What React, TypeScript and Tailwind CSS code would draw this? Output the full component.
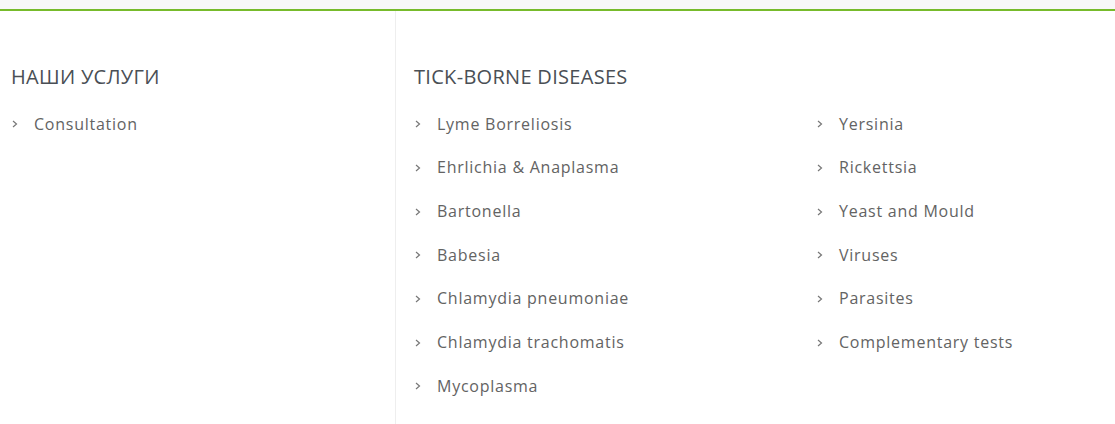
const services = ['Consultation'];

const diseases = [
  'Lyme Borreliosis',
  'Yersinia',
  'Ehrlichia & Anaplasma',
  'Rickettsia',
  'Bartonella',
  'Yeast and Mould',
  'Babesia',
  'Viruses',
  'Chlamydia pneumoniae',
  'Parasites',
  'Chlamydia trachomatis',
  'Complementary tests',
  'Mycoplasma',
];

function Item({ label }: { label: string }) {
  return (
    <li className="flex items-center h-[43.67px]">
      <span className="w-[23px] flex items-center pl-[1px] pt-[1px]">
        <svg width="6" height="8" viewBox="0 0 6 8" fill="none">
          <path d="M1 1l3.5 3L1 7" stroke="#777" strokeWidth="1.2" />
        </svg>
      </span>
      <span className="text-[16px] tracking-[0.75px] text-[#636363]">{label}</span>
    </li>
  );
}

export default function App() {
  return (
    <div
      className="w-[1115px] h-[424px] overflow-hidden bg-white"
      style={{ fontFamily: '"Open Sans", "Noto Sans", sans-serif' }}
    >
      <div className="h-[9px] bg-[#f8f8f8]" />
      <div className="h-[2px] bg-[#77bb2b]" />
      <div className="flex h-[413px]">
        {/* Left column */}
        <div className="w-[396px] shrink-0 border-r border-[#eeeeee] pl-[11px] pt-[54px]">
          <h3 className="text-[20px] leading-[24px] tracking-[0.3px] text-[#4a4f55] uppercase mb-[13px]">
            Наши услуги
          </h3>
          <ul>
            {services.map((s) => (
              <Item key={s} label={s} />
            ))}
          </ul>
        </div>

        {/* Right column */}
        <div className="flex-1 pl-[18px] pt-[54px]">
          <h3 className="text-[20px] leading-[24px] tracking-[0.3px] text-[#4a4f55] uppercase mb-[13px]">
            Tick-borne diseases
          </h3>
          <ul className="grid grid-cols-[402px_300px]">
            {diseases.map((d) => (
              <Item key={d} label={d} />
            ))}
          </ul>
        </div>
      </div>
    </div>
  );
}
